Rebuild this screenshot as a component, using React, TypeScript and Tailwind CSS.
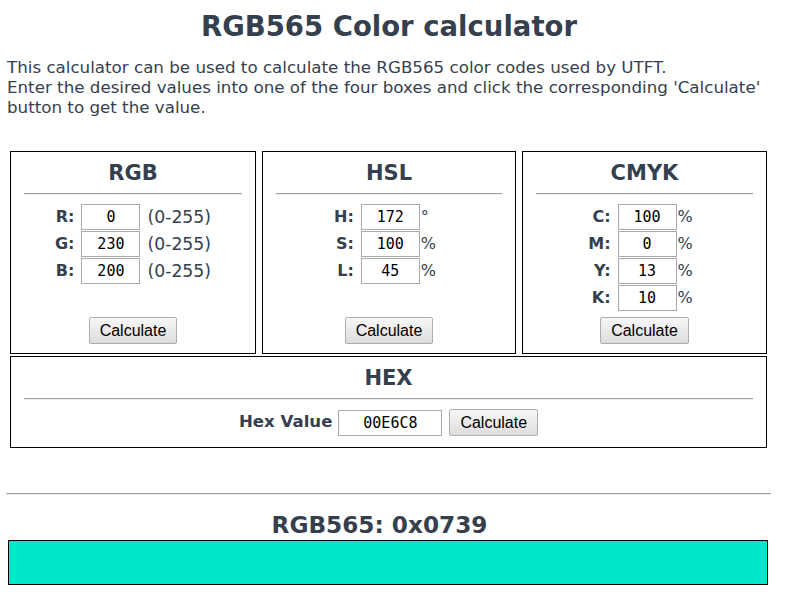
import React, { useState } from 'react';

const btn =
  "h-[27px] px-[10px] rounded-[2px] border border-[#adadad] bg-gradient-to-b from-[#f7f7f7] to-[#dddddd] font-['Liberation_Sans',Arial,sans-serif] text-[16px] text-black leading-none";

const inp =
  "h-[26px] w-[59px] border border-[#a9a9a9] bg-white text-center font-['DejaVu_Sans_Mono',monospace] text-[15px] text-black outline-none";

type Row = { label: string; value: string; unit: string };

const Box = ({
  title,
  rows,
  unitCls,
  gridCls = '',
}: {
  title: string;
  rows: Row[];
  unitCls: string;
  gridCls?: string;
}) => {
  const [vals, setVals] = useState(rows.map((r) => r.value));

  return (
    <div className="flex flex-col border border-black px-[13px] pt-[9px] pb-[9px]">
      <h2 className="text-center text-[21px] font-bold leading-[24px]">{title}</h2>
      <div className="mt-[8px] h-[2px] border-t border-b border-t-[#a0a0a0] border-b-[#eeeeee]" />

      {/* label / input / unit rows */}
      <div className={`mt-[9px] grid grid-cols-[auto_auto_auto] items-center justify-center gap-y-px ${gridCls}`}>
        {rows.map((r, i) => (
          <React.Fragment key={r.label}>
            <span className="text-right text-[16px] font-bold">{r.label}</span>
            <input
              className={`${inp} ml-[7px]`}
              value={vals[i]}
              onChange={(e) => setVals(vals.map((v, j) => (j === i ? e.target.value : v)))}
            />
            <span className={`${unitCls} self-start leading-[26px]`}>{r.unit}</span>
          </React.Fragment>
        ))}
      </div>

      <div className="mt-auto flex justify-center pt-[6px]">
        <button className={btn}>Calculate</button>
      </div>
    </div>
  );
};

export default function App() {
  const [hex, setHex] = useState('00E6C8');

  return (
    <div className="min-h-screen w-[806px] bg-white font-['DejaVu_Sans',Verdana,sans-serif] text-[#35404f]">
      <h1 className="pt-[10px] pr-[28px] text-center text-[27.5px] font-bold leading-[32px]">RGB565 Color calculator</h1>

      <p className="mt-[15px] px-[7px] text-[16.7px] leading-[20px]">
        This calculator can be used to calculate the RGB565 color codes used by UTFT.
        <br />
        Enter the desired values into one of the four boxes and click the corresponding 'Calculate'
        <br />
        button to get the value.
      </p>

      <div className="mt-[34px] ml-[10px] grid w-[757px] grid-cols-[246px_254px_245px] gap-x-[6px]">
        <Box
          title="RGB"
          unitCls="ml-[7px] text-[17.3px]"
          rows={[
            { label: 'R:', value: '0', unit: '(0-255)' },
            { label: 'G:', value: '230', unit: '(0-255)' },
            { label: 'B:', value: '200', unit: '(0-255)' },
          ]}
        />
        <Box
          title="HSL"
          unitCls="ml-[1px] text-[16px]"
          gridCls="pr-[8px]"
          rows={[
            { label: 'H:', value: '172', unit: '°' },
            { label: 'S:', value: '100', unit: '%' },
            { label: 'L:', value: '45', unit: '%' },
          ]}
        />
        <Box
          title="CMYK"
          unitCls="ml-[1px] text-[16px]"
          gridCls="pr-[8px]"
          rows={[
            { label: 'C:', value: '100', unit: '%' },
            { label: 'M:', value: '0', unit: '%' },
            { label: 'Y:', value: '13', unit: '%' },
            { label: 'K:', value: '10', unit: '%' },
          ]}
        />
      </div>

      {/* HEX */}
      <div className="mt-[2px] ml-[10px] w-[757px] border border-black px-[13px] pt-[9px] pb-[11px]">
        <h2 className="text-center text-[21px] font-bold leading-[24px]">HEX</h2>
        <div className="mt-[8px] h-[2px] border-t border-b border-t-[#a0a0a0] border-b-[#eeeeee]" />
        <div className="mt-[9px] flex items-center justify-center">
          <span className="text-[16.6px] font-bold">Hex Value</span>
          <input
            className={`${inp} ml-[6px] w-[104px]`}
            value={hex}
            onChange={(e) => setHex(e.target.value)}
          />
          <button className={`${btn} ml-[7px]`}>Calculate</button>
        </div>
      </div>

      <div className="mt-[45px] ml-[6px] h-[2px] w-[765px] border-t border-b border-t-[#a0a0a0] border-b-[#eeeeee]" />

      <h2 className="mt-[17px] pr-[47px] text-center text-[23.2px] font-bold leading-[26px]">RGB565: 0x0739</h2>
      <div className="mt-[2px] ml-[8px] h-[45px] w-[760px] border border-black bg-[#00e6c8]" />
    </div>
  );
}
